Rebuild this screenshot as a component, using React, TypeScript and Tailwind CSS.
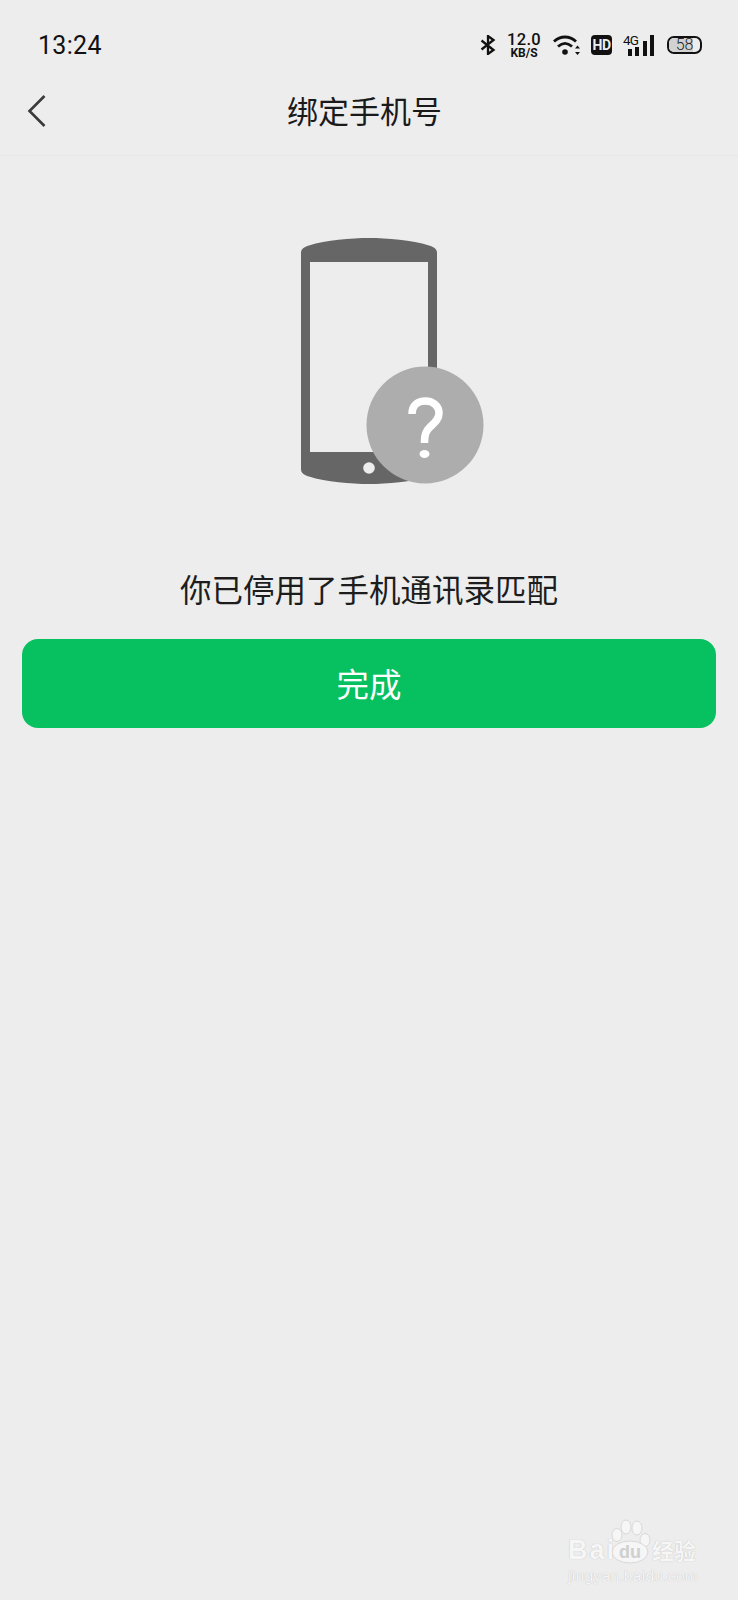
const cjk = "font-['Noto_Sans_CJK_SC','Noto_Sans',sans-serif]";

const StatusIcons = () => (
  <div className="flex items-center">
    {/* bluetooth */}
    <svg width="16" height="20" viewBox="0 0 16 20">
      <path
        d="M1.500 5.500l12 9.500-5.500 4V1l5.500 4-12 9.500"
        fill="none"
        stroke="#111"
        strokeWidth="2.3"
      />
    </svg>
    <div className="ml-[11px] flex w-[34px] flex-col items-center font-['Roboto',sans-serif] font-bold text-[#111]">
      <span className="text-[16.5px] leading-[15px] font-medium tracking-[0.3px]">12.0</span>
      <span className="text-[12px] leading-[12px]">KB/S</span>
    </div>
    {/* wifi */}
    <svg width="27" height="20" viewBox="0 0 27 20" className="ml-[12px]">
      <path d="M1 6.500C7.500 0.500 16.500 0.500 23 6.500" fill="none" stroke="#111" strokeWidth="2.800" />
      <path d="M5 11.500C9.500 7.500 14.500 7.500 19 11.500" fill="none" stroke="#111" strokeWidth="2.800" />
      <circle cx="12" cy="17" r="2.800" fill="#111" />
      <path d="M24.500 10.500l2.500 3h-5zM24.500 20l2.500-3h-5z" fill="#111" />
    </svg>
    <div className="ml-[11px] flex h-[20px] w-[21px] items-center justify-center rounded-[4px] bg-[#111] font-['Roboto',sans-serif] text-[14px] leading-none font-bold tracking-[-0.6px] text-[#ededed]">
      HD
    </div>
    {/* 4G + signal */}
    <div className="relative ml-[11px] h-[21px] w-[31px]">
      <span className="absolute top-[-1px] left-0 font-['Roboto',sans-serif] text-[13.5px] leading-[13px] tracking-[-0.8px] text-[#111]">
        4G
      </span>
      <div className="absolute right-0 bottom-0 flex items-end gap-[3.300px]">
        <div className="h-[7px] w-[4px] bg-[#111]" />
        <div className="h-[9px] w-[4px] bg-[#111]" />
        <div className="h-[15px] w-[4px] bg-[#111]" />
        <div className="h-[21px] w-[4px] bg-[#111]" />
      </div>
    </div>
    {/* battery */}
    <div className="relative ml-[13px] flex h-[18px] w-[35px] items-center justify-center overflow-hidden rounded-[7px] border-2 border-[#111] bg-[#ededed] font-['Roboto',sans-serif] text-[16px] leading-none font-light text-[#222]">
      <div className="absolute top-0 bottom-0 left-0 w-[78%] bg-[#d2d2d2]" />
      <span className="relative">58</span>
    </div>
  </div>
);

const PhoneIllustration = () => (
  <svg width="184" height="246" viewBox="0 0 184 246">
    <path
      d="M0 15C0 11 3 9 8 7.500 25 2 50 0 68 0s43 2 60 7.500c5 1.500 8 3.500 8 7.500v216c0 4-3 6-8 7.500-17 5.500-42 7.500-60 7.500s-43-2-60-7.500c-5-1.500-8-3.500-8-7.500z"
      fill="#666"
    />
    <rect x="9" y="24" width="118" height="190" fill="#ededed" />
    <circle cx="68" cy="230" r="5.800" fill="#ededed" />
    <circle cx="124" cy="187" r="58.500" fill="#adadad" />
    <path
      d="M111 176C111 167 117 163 124.500 163 132 163 138 168 138 175 138 182 133 185 129 189 125 193 123.500 196 123.500 205"
      fill="none"
      stroke="#fff"
      strokeWidth="7.500"
    />
    <ellipse cx="123.500" cy="216" rx="5" ry="4" fill="#fff" />
  </svg>
);

const Watermark = () => (
  <div className="absolute top-[1517px] left-[566px] h-[82px] w-[145px] text-[#f6f6f6] [text-shadow:0_0_1px_#b4b4b4]">
    <svg width="44" height="50" viewBox="0 0 44 50" className="absolute top-0 left-[44px]">
      <g fill="#f6f6f6" stroke="#d8d8d8" strokeWidth="1">
        <ellipse cx="7" cy="18" rx="5" ry="6.500" />
        <ellipse cx="16" cy="10" rx="5" ry="7" />
        <ellipse cx="27" cy="11" rx="5" ry="7" />
        <ellipse cx="35" cy="23" rx="5" ry="6.500" />
        <ellipse cx="20" cy="35" rx="18" ry="11" />
      </g>
    </svg>
    <span className="absolute top-[18px] left-[2px] font-['Liberation_Sans',sans-serif] text-[27px] leading-[30px] font-bold tracking-[2px]">
      Bai
    </span>
    <span className="absolute top-[25px] left-[53px] font-['Liberation_Sans',sans-serif] text-[18px] leading-[20px] font-bold text-[#cfcfcf] [text-shadow:none]">
      du
    </span>
    <span className={`absolute top-[19px] left-[86px] ${cjk} text-[22px] leading-[26px] font-bold whitespace-nowrap`}>
      经验
    </span>
    <span className="absolute top-[50px] left-[2px] font-['Liberation_Sans',sans-serif] text-[15.5px] leading-[18px] tracking-[0.3px] whitespace-nowrap">
      jingyan.baidu.com
    </span>
  </div>
);

export default function App() {
  return (
    <div className={`relative h-[1600px] w-[738px] overflow-hidden bg-[#ededed] ${cjk}`}>
      <div className="flex h-[76px] items-center justify-between pt-[14px] pr-[36px] pl-[38px]">
        <span className="font-['Roboto',sans-serif] text-[25px] leading-none tracking-[0.3px] text-[#111]">
          13:24
        </span>
        <StatusIcons />
      </div>

      <div className="relative flex h-[80px] items-center justify-center border-b border-[#e7e7e7] pr-[9px] pb-[12px]">
        <svg width="20" height="34" viewBox="0 0 20 34" className="absolute top-[18px] left-[27px]">
          <path d="M17.500 2L2.500 17l15 15" fill="none" stroke="#3a3a3a" strokeWidth="2.600" />
        </svg>
        <h1 className="text-[31px] leading-none font-normal text-[#1a1a1a]">绑定手机号</h1>
      </div>

      <div className="flex flex-col items-center">
        <div className="mt-[82px] pl-[48px]">
          <PhoneIllustration />
        </div>
        <p className="mt-[82px] text-[31.500px] leading-[44px] text-[#1d1d1d]">你已停用了手机通讯录匹配</p>
        <button className="mt-[29px] h-[89px] w-[694px] rounded-[16px] bg-[#07c160] text-[32.500px] text-white">
          完成
        </button>
      </div>

      <Watermark />
    </div>
  );
}
